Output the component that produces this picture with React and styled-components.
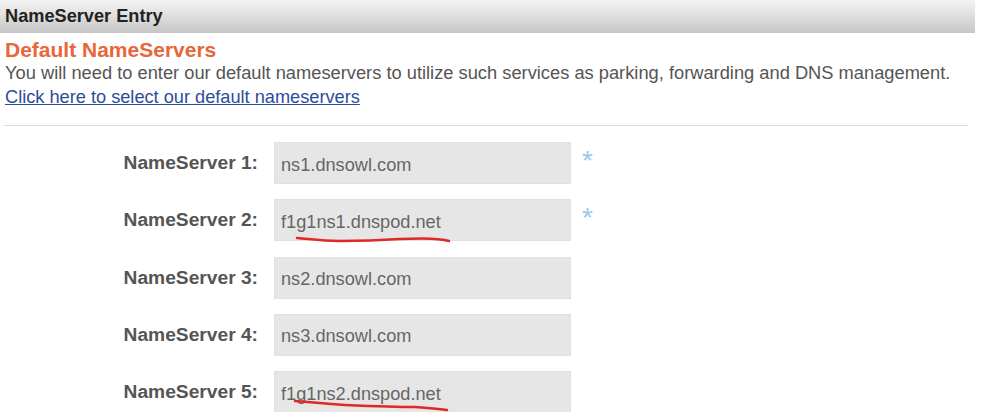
import React from "react";
import styled, { createGlobalStyle } from "styled-components";

const Global = createGlobalStyle`
  html, body { margin: 0; padding: 0; background: #fff; }
  body { font-family: "Liberation Sans", Arial, sans-serif; }
`;

const Page = styled.div`
  width: 993px;
  height: 412px;
  overflow: hidden;
  position: relative;
`;

const Panel = styled.div`
  width: 975px;
`;

const HeaderBar = styled.div`
  height: 33px;
  display: flex;
  align-items: center;
  padding-left: 5px;
  background: linear-gradient(to bottom, #f4f4f4 0%, #e0e0e0 45%, #c6c6c6 100%);
  font-size: 18.2px;
  font-weight: bold;
  color: #222;
`;

const Intro = styled.div`
  padding: 6px 5px 0 5px;
`;

const Title = styled.div`
  font-size: 21px;
  font-weight: bold;
  color: #e8663a;
  line-height: 22px;
`;

const Desc = styled.div`
  font-size: 18.3px;
  color: #555;
  line-height: 23px;
  white-space: nowrap;
`;

const Link = styled.a`
  font-size: 18.2px;
  color: #2c4c9c;
  text-decoration: underline;
  line-height: 23px;
  display: inline-block;
  margin-top: 2px;
`;

const Divider = styled.hr`
  margin: 16px 7px 0 4px;
  border: 0;
  border-top: 1px solid #dcdcdc;
`;

const Form = styled.div`
  display: grid;
  grid-template-columns: 258px 297px auto;
  column-gap: 16px;
  row-gap: 15.25px;
  align-items: center;
  margin-top: 16px;
`;

const Label = styled.label`
  text-align: right;
  font-size: 19.2px;
  font-weight: bold;
  color: #555;
`;

const Field = styled.div`
  height: 42px;
  box-sizing: border-box;
  background: #e6e6e6;
  border: 1px solid #e0e0e0;
  display: flex;
  align-items: center;
  padding: 4px 0 0 6px;
  font-size: 18.2px;
  color: #666;
`;

const Required = styled.span`
  color: #9cc8ee;
  font-size: 28px;
  margin-left: -5px;
  margin-top: -5px;
  visibility: ${(p) => (p.$show ? "visible" : "hidden")};
`;

const Scribble = styled.svg`
  position: absolute;
  left: 0;
  top: 0;
  pointer-events: none;
`;

const rows = [
  { n: 1, v: "ns1.dnsowl.com", req: true },
  { n: 2, v: "f1g1ns1.dnspod.net", req: true },
  { n: 3, v: "ns2.dnsowl.com" },
  { n: 4, v: "ns3.dnsowl.com" },
  { n: 5, v: "f1g1ns2.dnspod.net" },
];

export default function App() {
  return (
    <>
      <Global />
      <Page>
        <Panel>
          <HeaderBar>NameServer Entry</HeaderBar>
          <Intro>
            <Title>Default NameServers</Title>
            <Desc>
              You will need to enter our default nameservers to utilize such services as parking, forwarding and DNS management.
            </Desc>
            <Link href="#">Click here to select our default nameservers</Link>
          </Intro>
          <Divider />
          <Form>
            {rows.map((r) => (
              <React.Fragment key={r.n}>
                <Label>NameServer {r.n}:</Label>
                <Field>{r.v}</Field>
                <Required $show={r.req}>*</Required>
              </React.Fragment>
            ))}
          </Form>
        </Panel>
        <Scribble width="993" height="412" viewBox="0 0 993 412">
          <path
            d="M297 238 C 310 239, 320 241, 340 241 C 365 241, 385 240, 400 239 C 420 238, 440 238, 449 241"
            stroke="#e02828"
            strokeWidth="2.5"
            fill="none"
            strokeLinecap="round"
          />
          <path
            d="M295 401 C 310 402, 325 404, 345 405 C 370 406, 395 407, 415 407 C 430 408, 440 409, 447 410"
            stroke="#e02828"
            strokeWidth="2.5"
            fill="none"
            strokeLinecap="round"
          />
        </Scribble>
      </Page>
    </>
  );
}
